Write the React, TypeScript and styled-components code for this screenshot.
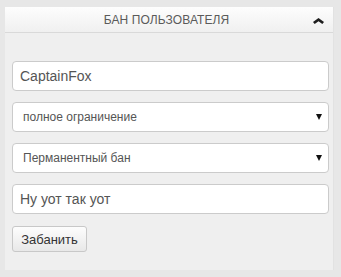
import React from 'react'
import styled, { createGlobalStyle } from 'styled-components'

const GlobalStyle = createGlobalStyle`
  html, body {
    margin: 0;
    padding: 0;
    background: #e7e7e7;
    font-family: "Liberation Sans", Arial, sans-serif;
  }
`

const Page = styled.div`
  padding: 7px 8px 0 5px;
  height: 270px;
  box-sizing: border-box;
`

const Panel = styled.section`
  width: 328px;
  background: #efefef;
  border-right: 1px solid #e2e2e2;
`

const Header = styled.div`
  position: relative;
  height: 26px;
  display: flex;
  align-items: center;
  justify-content: center;
  background: linear-gradient(#fdfdfd, #f0f0f0);
  border-bottom: 1px solid #d9d9d9;
  box-sizing: border-box;
`

const Title = styled.span`
  font-size: 12px;
  color: #5a5a5a;
  text-transform: uppercase;
  letter-spacing: 0.1px;
  margin-left: -5px;
`

const Toggle = styled.svg`
  position: absolute;
  right: 9px;
  top: 11px;
`

const Body = styled.form`
  padding: 28px 4px 20px 7px;
  display: flex;
  flex-direction: column;
  gap: 11px;
`

const TextInput = styled.input`
  height: 30px;
  box-sizing: border-box;
  border: 1px solid #cbcbcb;
  border-radius: 4px;
  background: #fff;
  padding: 0 7px;
  font: 14px "Liberation Sans", Arial, sans-serif;
  color: #555;
  outline: none;
`

const SelectWrap = styled.div`
  position: relative;
`

const Select = styled.select`
  width: 100%;
  height: 30px;
  box-sizing: border-box;
  appearance: none;
  border: 1px solid #cbcbcb;
  border-radius: 4px;
  background: #fff;
  padding: 0 10px;
  font: 12px "Liberation Sans", Arial, sans-serif;
  color: #555;
  outline: none;
`

const Arrow = styled.span`
  position: absolute;
  right: 7px;
  top: 12px;
  width: 0;
  height: 0;
  border-left: 3px solid transparent;
  border-right: 3px solid transparent;
  border-top: 6px solid #111;
  pointer-events: none;
`

const Button = styled.button`
  align-self: flex-start;
  width: 75px;
  height: 26px;
  margin-top: 1px;
  border: 1px solid #c8c8c8;
  border-radius: 3px;
  background: linear-gradient(#fdfdfd, #e8e8e8);
  font: 13px "Liberation Sans", Arial, sans-serif;
  color: #333;
  padding: 0;
`

const NextPanel = styled.div`
  margin-top: 1px;
  width: 328px;
  height: 10px;
  background: #fafafa;
`

type DropdownProps = {
  value: string
}

const Dropdown = (props: DropdownProps) => {
  return (
    <SelectWrap>
      <Select defaultValue={props.value}>
        <option value={props.value}>{props.value}</option>
      </Select>
      <Arrow />
    </SelectWrap>
  )
}

const App = () => {
  return (
    <>
      <GlobalStyle />
      <Page>
        <Panel>
          <Header>
            <Title>Бан пользователя</Title>
            <Toggle width="11" height="6" viewBox="0 0 11 6">
              <path d="M0 4 L5.5 0 L11 4 L9.3 6 L5.5 3.2 L1.7 6 Z" fill="#1e1e1e" />
            </Toggle>
          </Header>
          <Body onSubmit={e => e.preventDefault()}>
            <TextInput defaultValue="CaptainFox" />
            <Dropdown value="полное ограничение" />
            <Dropdown value="Перманентный бан" />
            <TextInput defaultValue="Ну уот так уот" />
            <Button type="submit">Забанить</Button>
          </Body>
        </Panel>
        <NextPanel />
      </Page>
    </>
  )
}

export default App
